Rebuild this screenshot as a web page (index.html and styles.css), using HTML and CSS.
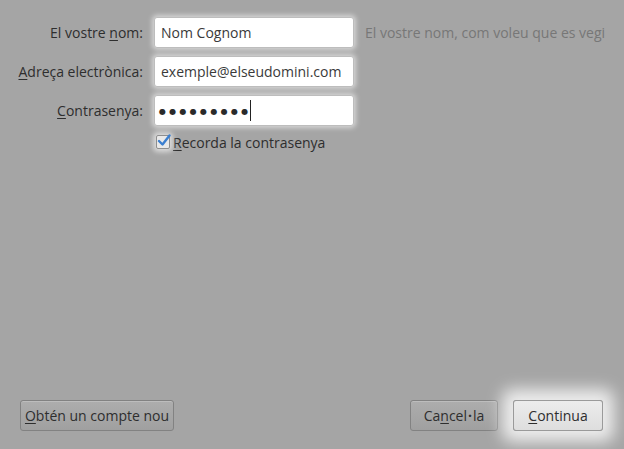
FILE: index.html
```html
<!DOCTYPE html>
<html lang="ca">
<head>
<meta charset="utf-8">
<link rel="stylesheet" href="styles.css">
</head>
<body>
<div class="dialog">
  <div class="form">
    <label class="label">El vostre <u>n</u>om:</label>
    <div class="input">Nom Cognom</div>
    <div class="hint">El vostre nom, com voleu que es vegi</div>

    <label class="label"><u>A</u>dreça electrònica:</label>
    <div class="input">exemple@elseudomini.com</div>
    <div></div>

    <label class="label"><u>C</u>ontrasenya:</label>
    <div class="input password"><span class="dots">●●●●●●●●●</span><span class="caret"></span></div>
    <div></div>

    <div></div>
    <div class="check-row">
      <span class="checkbox"><svg width="14" height="13" viewBox="0 0 14 13"><path d="M2 7 L5.5 10.5 L12.5 1.5" fill="none" stroke="#3b7fd0" stroke-width="2.4" stroke-linecap="round" stroke-linejoin="round"/></svg></span>
      <span class="check-label"><u>R</u>ecorda la contrasenya</span>
    </div>
    <div></div>
  </div>

  <div class="footer">
    <button class="btn btn-account"><u>O</u>btén un compte nou</button>
    <div class="spacer"></div>
    <button class="btn btn-cancel">Ca<u>n</u>cel<span class="middot">·</span>la</button>
    <button class="btn primary"><u>C</u>ontinua</button>
  </div>
</div>
</body>
</html>
```
FILE: styles.css
```css
html, body {
  margin: 0;
  padding: 0;
  background: #a5a5a5;
}
body {
  font-family: "Open Sans", "DejaVu Sans", sans-serif;
  font-size: 14px;
  color: #2e2e2e;
}
u {
  text-decoration: underline;
  text-underline-offset: 2px;
}
.dialog {
  height: 449px;
  display: flex;
  flex-direction: column;
  box-sizing: border-box;
  padding: 17px 21px 18px 20px;
}
.form {
  display: grid;
  grid-template-columns: 123px 200px auto;
  column-gap: 11px;
  row-gap: 8px;
  align-items: center;
}
.label {
  text-align: right;
  white-space: nowrap;
  justify-self: end;
}
.input {
  height: 31px;
  box-sizing: border-box;
  border: 1px solid #bdbdbd;
  border-radius: 3px;
  background: #ffffff;
  box-shadow: 0 0 5px 2px rgba(255,255,255,0.55);
  padding: 0 6px;
  display: flex;
  align-items: center;
  color: #3a3a3a;
  white-space: nowrap;
}
.hint {
  color: #777777;
  white-space: nowrap;
}
.password {
  padding-left: 4px;
}
.password .dots {
  font-size: 8px;
  letter-spacing: 3.3px;
  color: #2a2a2a;
}
.caret {
  display: inline-block;
  width: 1px;
  height: 21px;
  background: #222;
  margin-left: -2px;
}
.check-row {
  display: flex;
  align-items: center;
  gap: 3px;
  height: 20px;
  margin-top: -2px;
}
.checkbox {
  width: 12px;
  height: 12px;
  border: 1px solid #8e8e8e;
  border-radius: 2px;
  background: #e9e9e9;
  box-shadow: 0 0 5px 3px rgba(255,255,255,0.6);
  position: relative;
  margin-left: 2px;
}
.checkbox svg {
  position: absolute;
  left: 0;
  top: -2px;
}
.footer {
  margin-top: auto;
  display: flex;
  align-items: center;
  gap: 15px;
}
.spacer {
  flex: 1;
}
.btn {
  font-family: inherit;
  font-size: 14px;
  color: #2e2e2e;
  height: 31px;
  padding: 0;
  text-align: center;
  border: 1px solid #828282;
  border-radius: 3px;
  background: linear-gradient(#adadad, #a0a0a0);
  box-shadow: inset 0 1px 0 rgba(255,255,255,0.2);
}
.middot {
  margin: 0 1px;
  font-weight: 700;
}
.btn-account {
  width: 154px;
}
.btn-cancel {
  width: 88px;
}
.btn.primary {
  width: 90px;
  background: linear-gradient(#ececec, #dedede);
  border-color: #9a9a9a;
  box-shadow: 0 0 16px 11px rgba(255,255,255,0.8);
}
```
